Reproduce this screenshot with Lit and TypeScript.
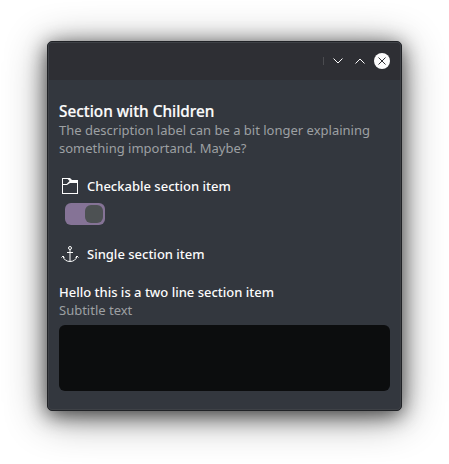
import { LitElement, html, css } from "lit";
import { customElement } from "lit/decorators.js";

@customElement("app-root")
export class AppRoot extends LitElement {
  static styles = css`
    :host {
      display: block;
      box-sizing: border-box;
      height: 464px;
      padding: 41px 47px 53px;
      overflow: hidden;
      background: #fff;
      font-family: "Noto Sans", sans-serif;
      font-size: 13px;
      line-height: 18px;
      color: #fcfcfc;
    }
    svg { display: block; flex: none; }
    .window {
      box-sizing: border-box;
      width: 355px;
      height: 370px;
      border: 1px solid #202226;
      border-radius: 5px;
      background: #33373e;
      box-shadow: 0 6px 42px rgba(0, 0, 0, 0.45), 0 4px 20px rgba(0, 0, 0, 0.62);
    }
    .frame {
      box-sizing: border-box;
      height: 368px;
      border: 1px solid #3e4146;
      border-radius: 4px;
      overflow: hidden;
    }
    .titlebar {
      box-sizing: border-box;
      display: flex;
      justify-content: flex-end;
      align-items: center;
      height: 37px;
      padding: 0 10px 1px 0;
      gap: 6px;
      background: #2e2f34;
    }
    .separator { width: 1px; height: 8px; background: #4b4c50; }
    .content { padding: 21px 10px 0; }
    h1 {
      margin: 0;
      font-size: 15.333px;
      line-height: 20px;
      font-weight: 500;
      -webkit-text-stroke: 0.2px #fcfcfc;
    }
    p { margin: 0; color: #9da0a3; }
    .item {
      display: flex;
      align-items: center;
      gap: 6px;
      height: 22px;
      font-weight: 500;
    }
    .checkable { margin-top: 18px; }
    .single { margin-top: 18px; }
    .toggle {
      box-sizing: border-box;
      display: flex;
      justify-content: flex-end;
      width: 40px;
      height: 22px;
      margin: 6px 0 0 6px;
      padding: 2px;
      border-radius: 6px;
      background: #857396;
    }
    .knob { width: 18px; height: 18px; border-radius: 6px; background: #4d5153; }
    .headline { margin-top: 18px; font-weight: 500; }
    .panel { height: 66px; margin-top: 6px; border-radius: 6px; background: #0c0d0e; }
  `;

  render() {
    return html`
      <div class="window"><div class="frame">
        <div class="titlebar">
          <div class="separator"></div>
          <svg width="16" height="16" viewBox="0 0 16 16" fill="none" stroke="#fcfcfc"><path d="M3.500 5.500 8 10l4.500-4.500"/></svg>
          <svg width="16" height="16" viewBox="0 0 16 16" fill="none" stroke="#fcfcfc"><path d="M3.500 10.500 8 6l4.500 4.500"/></svg>
          <svg width="16" height="16" viewBox="0 0 16 16" fill="none"><circle cx="8" cy="8" r="8" fill="#fcfcfc"/><path d="m4.500 4.500 7 7m0-7-7 7" stroke="#2e2f34"/></svg>
        </div>
        <div class="content">
          <h1>Section with Children</h1>
          <p>The description label can be a bit longer explaining something importand. Maybe?</p>
          <div class="item checkable">
            <svg width="22" height="22" viewBox="0 0 22 22">
              <path d="M3 3h8l2 2h6v14H3zM4 4v5h3.600l3-3L8.600 4zM4 10v8h14V8h-7L8 10z" fill="#fcfcfc" fill-rule="evenodd"/>
            </svg>
            <span>Checkable section item</span>
          </div>
          <div class="toggle"><div class="knob"></div></div>
          <div class="item single">
            <svg width="22" height="22" viewBox="0 0 22 22" fill="none" stroke="#fcfcfc">
              <circle cx="11" cy="5" r="1.500"/>
              <path d="M11 6.500V18M8 9.500h6M2.500 14.500l1.500-1.500 1.500 1.500M16.500 14.500l1.500-1.500 1.500 1.500M4 13.500c1 3.200 3.500 5 7 5s6-1.800 7-5"/>
            </svg>
            <span>Single section item</span>
          </div>
          <div class="headline">Hello this is a two line section item</div>
          <p>Subtitle text</p>
          <div class="panel"></div>
        </div>
      </div></div>
    `;
  }
}
